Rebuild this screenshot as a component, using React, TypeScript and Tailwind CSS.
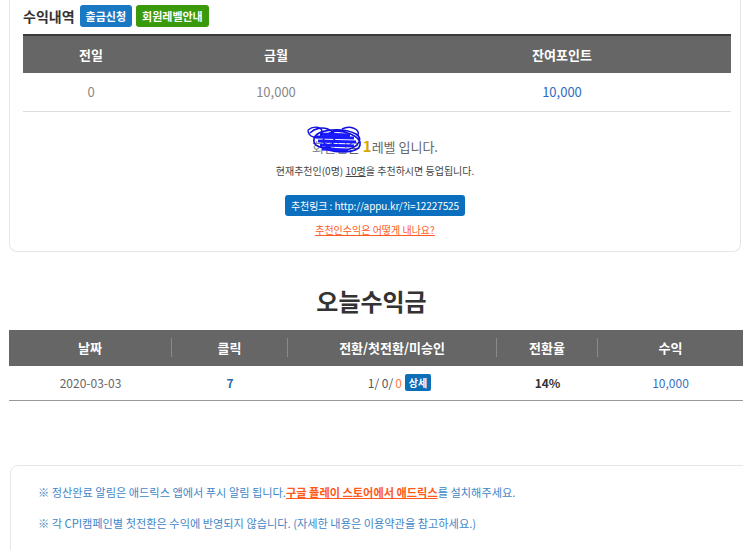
import React from 'react';

const font = { fontFamily: '"Noto Sans CJK KR", "Noto Sans", sans-serif' };

const Scribble = () => (
  <svg className="absolute left-[-6px] top-[-12px]" width="60" height="32" viewBox="0 0 60 32" fill="none">
    <path d="M4 8 C 14 -2, 32 4, 28 16 C 24 26, 6 24, 8 14 C 10 4, 36 2, 50 9 C 60 15, 48 27, 32 25 C 16 23, 12 12, 26 7 C 36 4, 56 11, 54 20 C 52 29, 24 29, 14 21" stroke="#1010e0" strokeWidth="1.6" />
    <path d="M10 12 L 48 13 M 12 16 L 50 17 M 14 20 L 48 21 M 16 24 L 42 25 M 14 9 L 44 10" stroke="#1a1aff" strokeWidth="3" />
    <path d="M2 5 C 8 0, 18 2, 16 9 C 14 15, 2 13, 2 5" stroke="#1010e0" strokeWidth="1.4" />
    <path d="M36 4 C 44 0, 54 4, 52 10" stroke="#1010e0" strokeWidth="1.4" />
  </svg>
);

const App = () => {
  return (
    <div className="w-[743px] h-[550px] overflow-hidden bg-white text-[#333]" style={font}>
      <div className="ml-[9px] w-[732px] rounded-b-lg border border-t-0 border-[#e6e6e6] px-[13px] pt-[5px] pb-[14px]">
        <div className="flex h-[22px] items-center gap-[4px]">
          <h3 className="mr-[1px] text-[14px] font-bold text-[#333]">수익내역</h3>
          <span className="flex h-[22px] items-center rounded-[3px] bg-[#1b78c2] px-[6px] text-[11px] font-bold text-white">출금신청</span>
          <span className="flex h-[22px] items-center rounded-[3px] bg-[#3a9a0c] px-[6px] text-[11px] font-bold text-white">회원레벨안내</span>
        </div>

        <div className="mt-[7px] w-[708px]">
          <div className="grid h-[39px] grid-cols-[136px_234px_338px] items-center border-t-2 border-[#3a3a3a] bg-[#666] text-[13px] font-bold text-white">
            <div className="text-center">전일</div>
            <div className="text-center">금월</div>
            <div className="text-center">잔여포인트</div>
          </div>
          <div className="grid h-[39px] grid-cols-[136px_234px_338px] items-center border-b border-[#ddd] text-[13px]">
            <div className="text-center text-[#888]">0</div>
            <div className="text-center text-[#888]">10,000</div>
            <div className="text-center text-[#2f6cbf]">10,000</div>
          </div>
        </div>

        <div className="mt-[23px] flex flex-col items-center">
          <p className="text-[13px] text-[#666]">
            <span className="relative inline-block text-[#888]">
              회원님
              <Scribble />
            </span>
            은 <b className="text-[15px] text-[#d4a800]">1</b>레벨 입니다.
          </p>
          <p className="mt-[5px] text-[10px] text-[#444]">
            현재추천인(0명) <span className="underline">10명</span>을 추천하시면 등업됩니다.
          </p>
          <span className="mt-[17px] flex h-[21px] items-center rounded-[3px] bg-[#0b6fbd] px-[6px] text-[10px] tracking-[-0.1px] text-white">
            추천링크 : http://appu.kr/?i=12227525
          </span>
          <a className="mt-[6px] text-[10px] text-[#ff5a22] underline">추천인수익은 어떻게 내나요?</a>
        </div>
      </div>

      <h2 className="mt-[31px] text-center text-[24px] font-bold text-[#333]">오늘수익금</h2>

      <div className="mt-[11px] ml-[9px] w-[734px]">
        <div className="grid h-[36px] grid-cols-[163px_116px_209px_101px_145px] items-center bg-[#666] text-[13px] font-bold text-white">
          <div className="border-r border-[#8a8a8a] text-center">날짜</div>
          <div className="border-r border-[#8a8a8a] text-center">클릭</div>
          <div className="border-r border-[#8a8a8a] text-center">전환/첫전환/미승인</div>
          <div className="border-r border-[#8a8a8a] text-center">전환율</div>
          <div className="text-center">수익</div>
        </div>
        <div className="grid h-[35px] grid-cols-[163px_116px_209px_101px_145px] items-center border-b border-[#999] text-[12px]">
          <div className="text-center text-[#666]">2020-03-03</div>
          <div className="text-center font-bold text-[#2a6aae]">7</div>
          <div className="flex items-center justify-center pl-[14px] text-[#555]">
            1/ 0/ <span className="ml-[2px] text-[#ff7a3a]">0</span>
            <span className="ml-[3px] flex h-[17px] items-center rounded-[2px] bg-[#0d6eb8] px-[4px] text-[10px] font-bold text-white">상세</span>
          </div>
          <div className="text-center font-bold text-[#333]">14%</div>
          <div className="text-center text-[#3b6fc2]">10,000</div>
        </div>
      </div>

      <div className="mt-[64px] ml-[10px] h-[120px] w-[760px] rounded-lg border border-[#e6e6e6] px-[27px] pt-[18px] text-[11.2px] text-[#3f86c6]">
        <p>
          ※ 정산완료 알림은 애드릭스 앱에서 푸시 알림 됩니다.
          <span className="font-bold text-[#ff5a1a] underline">구글 플레이 스토어에서 애드릭스</span>를 설치해주세요.
        </p>
        <p className="mt-[15px]">※ 각 CPI캠페인별 첫전환은 수익에 반영되지 않습니다. (자세한 내용은 이용약관을 참고하세요.)</p>
      </div>
    </div>
  );
};

export default App;
